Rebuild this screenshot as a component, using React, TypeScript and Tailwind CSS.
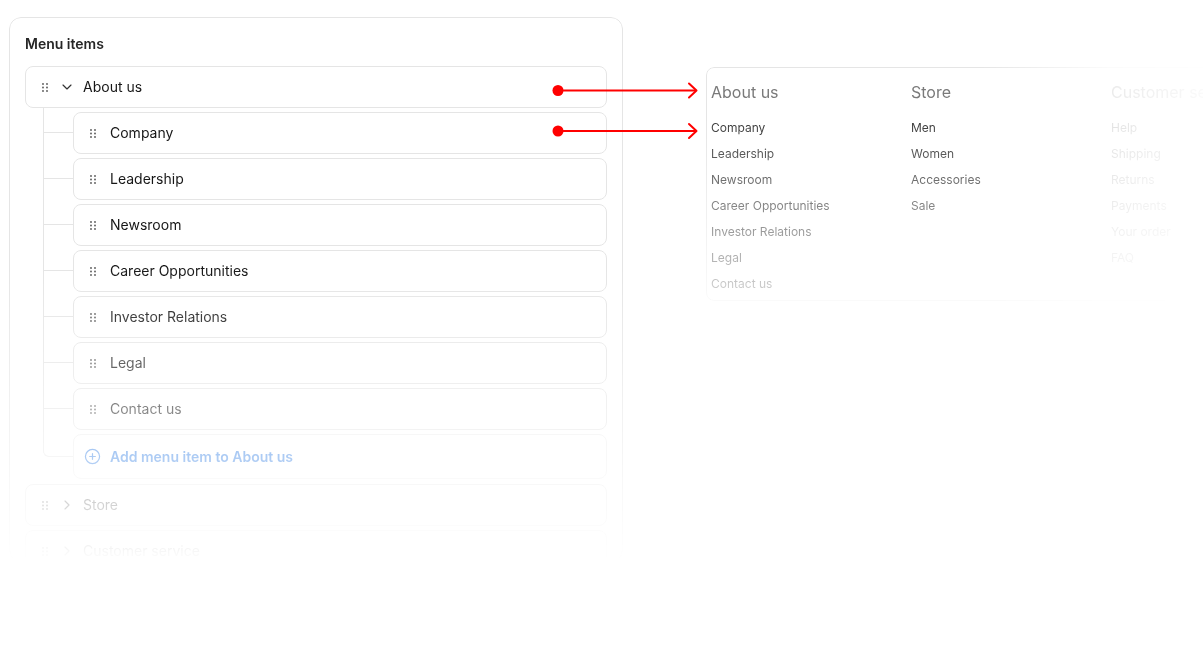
import { ChevronDown, ChevronRight, CirclePlus } from "lucide-react";

const children = [
  "Company",
  "Leadership",
  "Newsroom",
  "Career Opportunities",
  "Investor Relations",
  "Legal",
  "Contact us",
];

const columns = [
  {
    title: "About us",
    items: ["Company", "Leadership", "Newsroom", "Career Opportunities", "Investor Relations", "Legal", "Contact us"],
  },
  { title: "Store", items: ["Men", "Women", "Accessories", "Sale"] },
  { title: "Customer service", items: ["Help", "Shipping", "Returns", "Payments", "Your order", "FAQ"] },
];

// puntos de arrastre 2x3
function Grip() {
  return (
    <svg width="6" height="9" viewBox="0 0 6 9" className="shrink-0 text-[#555]" fill="currentColor">
      <circle cx="1" cy="1" r="0.9" />
      <circle cx="5" cy="1" r="0.9" />
      <circle cx="1" cy="4.5" r="0.9" />
      <circle cx="5" cy="4.5" r="0.9" />
      <circle cx="1" cy="8" r="0.9" />
      <circle cx="5" cy="8" r="0.9" />
    </svg>
  );
}

function ParentRow({ label, open }: { label: string; open?: boolean }) {
  return (
    <div className="flex h-[42px] items-center rounded-lg border border-[#e5e5e5] bg-white pl-4">
      <Grip />
      {open ? (
        <ChevronDown size={16} strokeWidth={1.75} className="ml-[11px] text-[#333]" />
      ) : (
        <ChevronRight size={16} strokeWidth={1.75} className="ml-[11px] text-[#333]" />
      )}
      <span className="ml-[8px] text-sm text-[#171717]">{label}</span>
    </div>
  );
}

export default function App() {
  return (
    <div className="relative flex h-[652px] w-[1203px] items-start overflow-hidden bg-white font-['Inter',sans-serif]">
      {/* Panel izquierdo: árbol del menú */}
      <div className="ml-[9px] mt-[17px] h-[545px] w-[614px] shrink-0 overflow-hidden rounded-xl border border-[#e5e5e5] pl-[15px] pr-[15px] pt-4 [mask-image:linear-gradient(to_bottom,black_250px,transparent_545px)]">
        <h2 className="text-sm font-semibold leading-5 text-[#262626]">Menu items</h2>

        <div className="mt-3">
          <ParentRow label="About us" open />

          <div className="ml-[18px]">
            {children.map((c) => (
              <div key={c} className="flex">
                <div className="w-[30px] shrink-0 border-l border-[#e5e5e5]">
                  <div className="h-[25px] border-b border-[#e5e5e5]" />
                </div>
                <div className="flex-1 pt-1">
                  <div className="flex h-[42px] items-center rounded-lg border border-[#e5e5e5] bg-white pl-4">
                    <Grip />
                    <span className="ml-[14px] text-sm text-[#171717]">{c}</span>
                  </div>
                </div>
              </div>
            ))}

            <div className="flex">
              <div className="w-[30px] shrink-0">
                <div className="h-[27px] rounded-bl-md border-b border-l border-[#e5e5e5]" />
              </div>
              <div className="flex-1 pt-1">
                <div className="flex h-[45px] items-center rounded-lg border border-[#ececec] bg-white pl-[10px]">
                  <CirclePlus size={17} strokeWidth={1.75} className="text-[#1a6fe0]" />
                  <span className="ml-[9px] text-sm font-semibold text-[#1a6fe0]">Add menu item to About us</span>
                </div>
              </div>
            </div>
          </div>

          <div className="mt-[5px] flex flex-col gap-1">
            <ParentRow label="Store" />
            <ParentRow label="Customer service" />
          </div>
        </div>
      </div>

      {/* Panel derecho: vista previa */}
      <div className="ml-[83px] mt-[67px] flex w-[620px] shrink-0 rounded-lg border border-[#e5e5e5] pb-2 pl-[4px] pt-3 [mask-composite:intersect] [mask-image:linear-gradient(to_right,black_275px,rgba(0,0,0,0.15)_405px,transparent_530px),linear-gradient(to_bottom,black_50px,rgba(0,0,0,0.2)_235px)]">
        {columns.map((col) => (
          <div key={col.title} className="w-[200px] shrink-0">
            <div className="whitespace-nowrap text-base leading-6 text-[#7a7a7a]">{col.title}</div>
            <ul className="mt-4 flex flex-col gap-[10px] text-xs leading-4 text-[#3a3a3a]">
              {col.items.map((it) => (
                <li key={it}>{it}</li>
              ))}
            </ul>
          </div>
        ))}
      </div>

      {/* Flechas rojas */}
      <svg
        className="pointer-events-none absolute left-[550px] top-[80px]"
        width="155"
        height="60"
        viewBox="0 0 155 60"
        fill="none"
        stroke="#ff0000"
        strokeWidth="2"
      >
        <circle cx="8" cy="10.5" r="5.5" fill="#ff0000" stroke="none" />
        <path d="M8 10.5H146" />
        <path d="M139 3.5L146.5 10.5L139 17.5" strokeLinecap="round" strokeLinejoin="round" />
        <circle cx="8" cy="51" r="5.5" fill="#ff0000" stroke="none" />
        <path d="M8 51H146" />
        <path d="M139 44L146.5 51L139 58" strokeLinecap="round" strokeLinejoin="round" />
      </svg>
    </div>
  );
}
